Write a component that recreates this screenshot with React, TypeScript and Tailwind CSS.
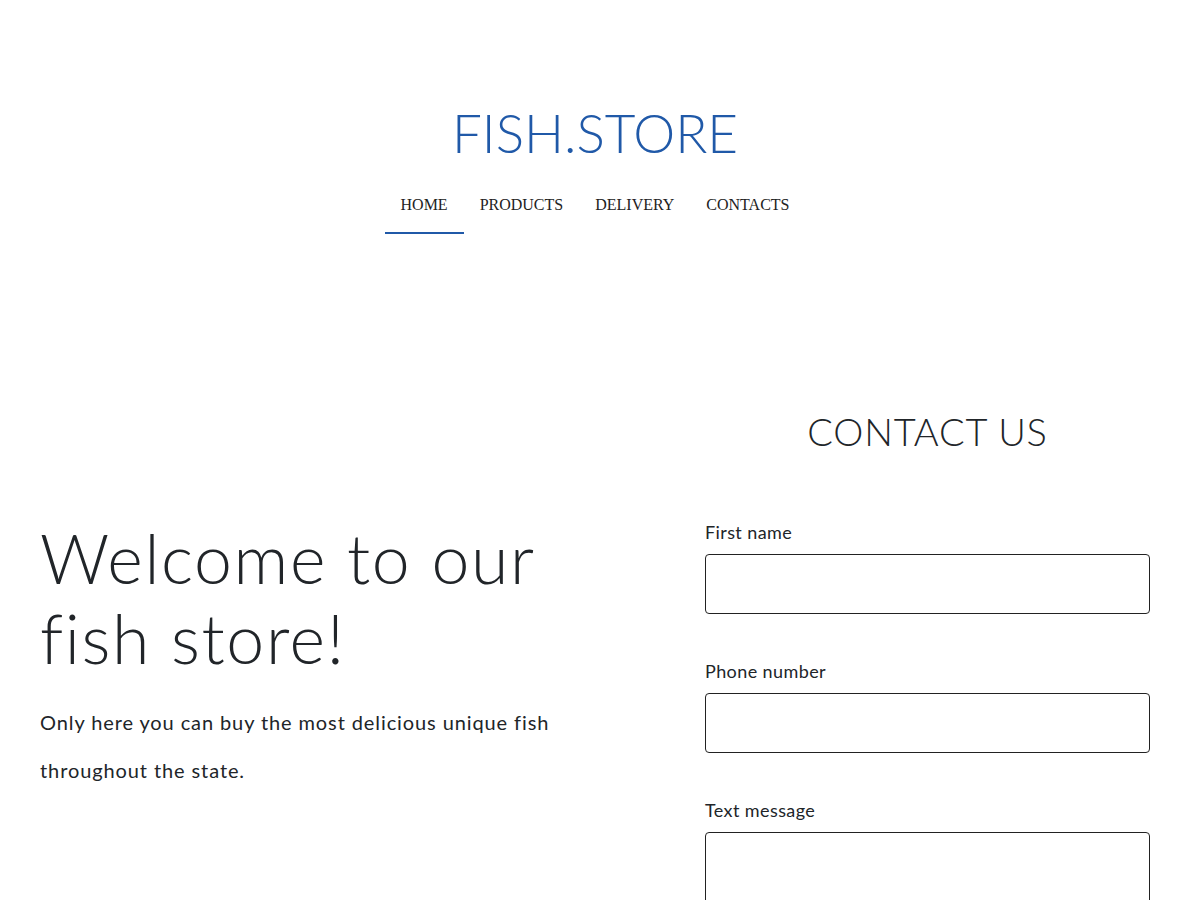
import React from 'react';

const navItems = ['HOME', 'PRODUCTS', 'DELIVERY', 'CONTACTS'];

function Field({ label, tall }: { label: string; tall?: boolean }) {
  return (
    <div className="mb-[44px]">
      <label className="block text-[18px] leading-[27px] mb-[8px] tracking-[0.4px] text-[#212529]">{label}</label>
      {tall ? (
        <textarea className="block w-full h-[120px] border border-[#222] rounded-[4px] outline-none resize-none" />
      ) : (
        <input type="text" className="block w-full h-[60px] border border-[#222] rounded-[4px] outline-none" />
      )}
    </div>
  );
}

export default function App() {
  return (
    <div className="h-[900px] overflow-hidden bg-white text-[#212529] font-['Lato','Noto_Sans',sans-serif] pl-[40px] pr-[50px]">
      <header className="pt-[101px] flex flex-col items-center">
        <h1 className="text-[53px] leading-[64px] font-light text-[#2059a8]">FISH.STORE</h1>
        <nav className="mt-[22px] flex font-['Liberation_Serif',serif] text-[16px] text-[#222]">
          {navItems.map((item, i) => (
            <a
              key={item}
              href="#"
              className={`px-[16px] pt-[8px] pb-[17px] leading-[20px] border-b-2 ${i === 0 ? 'border-[#2059a8]' : 'border-transparent'}`}
            >
              {item}
            </a>
          ))}
        </nav>
      </header>

      <main className="mt-[167px] grid grid-cols-[1fr_445px] gap-[110px]">
        <section className="pt-[117px]">
          <h2 className="text-[68px] leading-[80px] font-light tracking-[1.6px] max-w-[600px]">Welcome to our fish store!</h2>
          <p className="mt-[20px] text-[20px] leading-[48px] tracking-[0.9px] max-w-[580px]">
            Only here you can buy the most delicious unique fish throughout the state.
          </p>
        </section>

        <section className="pt-[7px]">
          <h2 className="text-center text-[38px] leading-[46px] font-light tracking-[0.8px]">CONTACT US</h2>
          <form className="mt-[65px]">
            <Field label="First name" />
            <Field label="Phone number" />
            <Field label="Text message" tall />
          </form>
        </section>
      </main>
    </div>
  );
}
